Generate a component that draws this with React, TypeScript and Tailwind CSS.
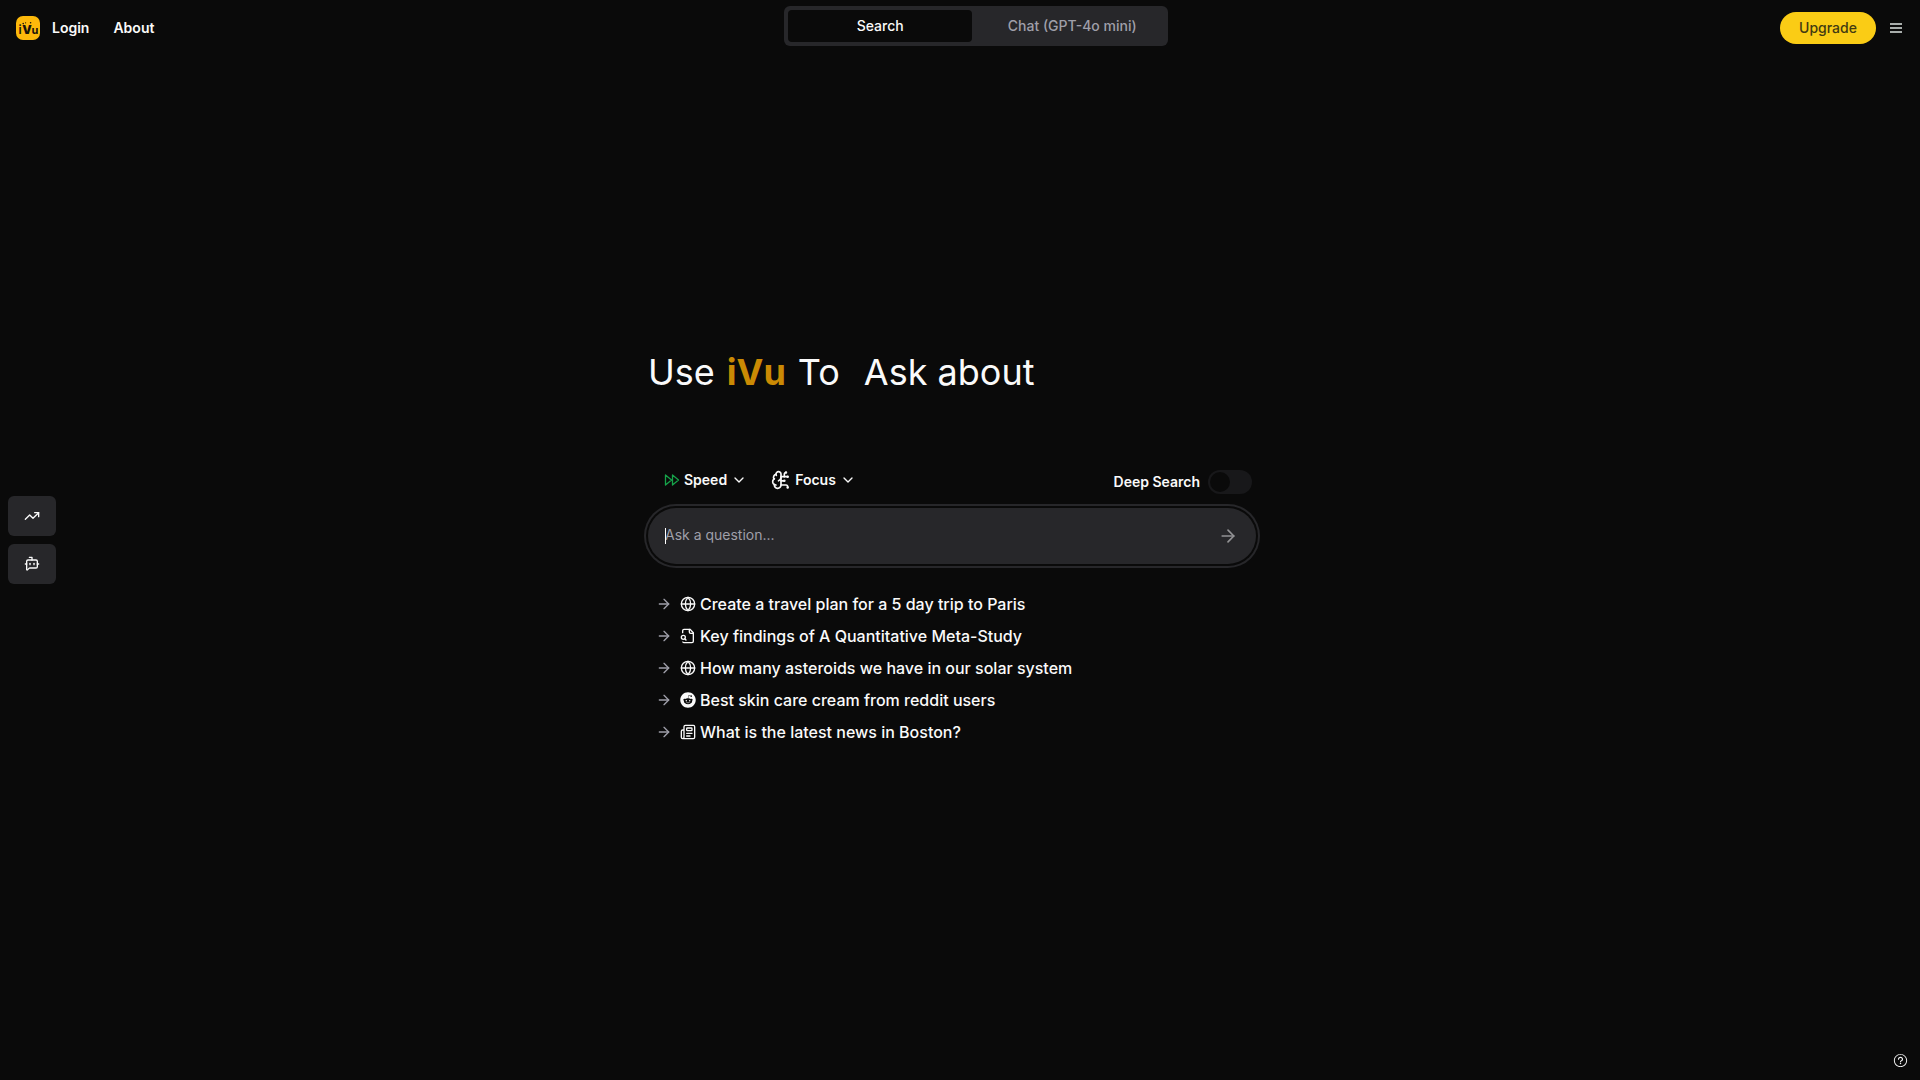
import React, { FormEvent, useState } from 'react';
import {
  ArrowRight,
  BotMessageSquare,
  BrainCircuit,
  ChevronDown,
  Globe,
  Newspaper,
  TrendingUp,
} from 'lucide-react';
import { FaReddit } from 'react-icons/fa';
import { RxQuestionMarkCircled } from 'react-icons/rx';

function PaperIcon({ className }: { className?: string }) {
  return (
    <svg
      viewBox="0 0 24 24"
      className={className}
      fill="none"
      stroke="currentColor"
      strokeWidth="2"
      strokeLinecap="round"
      strokeLinejoin="round"
    >
      <path d="M14 2v4a2 2 0 0 0 2 2h4" />
      <path d="M4.268 21a2 2 0 0 0 1.727 1H18a2 2 0 0 0 2-2V7l-5-5H6a2 2 0 0 0-2 2v3" />
      <path d="m9 18-1.5-1.5" />
      <circle cx="5" cy="14" r="3" />
    </svg>
  );
}

function SpeedIcon({ className }: { className?: string }) {
  return (
    <svg
      viewBox="0 0 16 16"
      className={className}
      fill="none"
      stroke="currentColor"
      strokeWidth="1.3"
      strokeLinejoin="round"
    >
      <path d="M1.5 3l6 5-6 5zM8.5 3l6 5-6 5z" />
    </svg>
  );
}

const suggestions = [
  { text: "Create a travel plan for a 5 day trip to Paris", icon: Globe },
  { text: "Key findings of A Quantitative Meta-Study", icon: PaperIcon },
  { text: "How many asteroids we have in our solar system", icon: Globe },
  { text: "Best skin care cream from reddit users", icon: FaReddit },
  { text: "What is the latest news in Boston?", icon: Newspaper },
];

function Logo() {
  return (
    <svg viewBox="0 0 24 24" className="size-6" role="img" aria-label="iVu">
      <rect width="24" height="24" rx="7" fill="#fdb90b" />
      <g fill="#17130a" fontFamily="Inter, sans-serif">
        <text x="2.6" y="17.8" fontSize="12" fontWeight="600">i</text>
        <text x="6.2" y="17.8" fontSize="12" fontWeight="900">V</text>
        <text x="15.4" y="17.8" fontSize="11" fontWeight="700">u</text>
        <circle cx="7.2" cy="7.6" r="0.8" />
        <circle cx="9.6" cy="6.8" r="0.6" />
        <circle cx="14.6" cy="6.8" r="0.8" />
      </g>
    </svg>
  );
}

function Header() {
  const [tab, setTab] = useState("search");
  const active = "bg-[#0a0a0a] text-neutral-50";
  const idle = "text-zinc-400";

  return (
    <header className="flex h-14 items-center justify-between pl-4 pr-3">
      <nav className="flex items-center pr-[6px] text-sm font-semibold">
        <a href="#home"><Logo /></a>
        <a href="#login" className="px-3">Login</a>
        <a href="#about" className="px-3">About</a>
      </nav>

      <div className="mb-1 grid h-10 w-96 grid-cols-2 gap-2 rounded-md bg-zinc-800 p-1 text-sm font-medium">
        <button type="button" onClick={() => setTab("search")} className={`rounded ${tab === "search" ? active : idle}`}>
          Search
        </button>
        <button type="button" onClick={() => setTab("chat")} className={`rounded ${tab === "chat" ? active : idle}`}>
          Chat (GPT-4o mini)
        </button>
      </div>

      <div className="flex items-center gap-2">
        <button type="button" className="h-8 w-24 rounded-full bg-[#facc15] text-sm font-medium text-[#423a12]">
          Upgrade
        </button>
        <button type="button" aria-label="Menu" className="p-[6px] text-[#a8adab]">
          <svg viewBox="0 0 12 12" className="size-3" fill="currentColor">
            <path d="M0 1h12v2H0zM0 5h12v2H0zM0 9h12v2H0z" />
          </svg>
        </button>
      </div>
    </header>
  );
}

function App() {
  const [query, setQuery] = useState("");
  const [deep, setDeep] = useState(false);

  function handleSubmit(e: FormEvent) {
    e.preventDefault();
  }

  return (
    <div className="flex min-h-screen flex-col bg-[#0a0a0a] font-['Inter',sans-serif] text-neutral-50">
      <Header />

      <aside className="fixed left-2 top-1/2 flex -translate-y-1/2 flex-col gap-2">
        <button type="button" aria-label="Trending" className="flex h-10 w-12 items-center justify-center rounded-md bg-zinc-800">
          <TrendingUp className="size-4" />
        </button>
        <button type="button" aria-label="Assistants" className="flex h-10 w-12 items-center justify-center rounded-md bg-zinc-800">
          <BotMessageSquare className="size-4" />
        </button>
      </aside>

      <main className="flex flex-1 flex-col items-center justify-center pb-9 pr-4">
        <div className="w-full max-w-2xl px-8">
          <h1 className="flex gap-3 text-4xl/10">
            <span>Use</span>
            <b className="font-bold text-[#ca8a04]">iVu</b>
            <span>To</span>
            <span className="ml-3">Ask about</span>
          </h1>

          <form onSubmit={handleSubmit} className="mt-18">
            <div className="flex items-start justify-between pr-1">
              <div className="flex text-sm font-semibold">
                <button type="button" className="flex h-8 items-center gap-1 pl-4 pr-3">
                  <SpeedIcon className="size-4 text-[#16a34a]" />
                  Speed
                  <ChevronDown className="size-4" />
                </button>
                <button type="button" className="flex h-8 items-center gap-1 px-3">
                  <BrainCircuit className="size-5" />
                  Focus
                  <ChevronDown className="size-4" />
                </button>
              </div>
              <div className="flex h-9 items-center gap-2">
                <label htmlFor="deep" className="text-sm font-semibold">Deep Search</label>
                <input
                  type="checkbox"
                  role="switch"
                  id="deep"
                  checked={deep}
                  onChange={(e) => setDeep(e.target.checked)}
                  className="h-6 w-11 appearance-none rounded-full bg-[#18181a] p-[2px] before:block before:size-5 before:rounded-full before:bg-[#0a0a0a] checked:bg-yellow-600 checked:before:translate-x-5"
                />
              </div>
            </div>

            <div className="relative mt-2 flex h-14 items-center rounded-full bg-zinc-800 pl-4 pr-3 ring-2 ring-zinc-800 ring-offset-2 ring-offset-[#0a0a0a]">
              <input
                type="text"
                aria-label="Ask a question"
                placeholder="Ask a question..."
                value={query}
                onChange={(e) => setQuery(e.target.value)}
                className="peer h-10 flex-1 bg-transparent pb-1 pl-px text-sm outline-none placeholder:text-zinc-400"
              />
              <span className="absolute left-[17px] hidden h-4 w-px bg-white peer-placeholder-shown:block peer-focus:hidden" />
              <button type="submit" aria-label="Send" className="flex size-8 items-center justify-center text-[#939395]">
                <ArrowRight className="size-5" />
              </button>
            </div>
          </form>

          <ul className="mt-6 pl-2">
            {suggestions.map(({ text, icon: Icon }) => (
              <li key={text}>
                <button type="button" onClick={() => setQuery(text)} className="flex h-8 items-center font-medium">
                  <ArrowRight className="mr-2 size-4 text-zinc-400" />
                  <Icon className="mr-1 size-4" />
                  {text}
                </button>
              </li>
            ))}
          </ul>
        </div>
      </main>

      <button type="button" aria-label="Help" className="fixed bottom-3 right-3">
        <RxQuestionMarkCircled className="size-[15px]" />
      </button>
    </div>
  );
}

export default App;
